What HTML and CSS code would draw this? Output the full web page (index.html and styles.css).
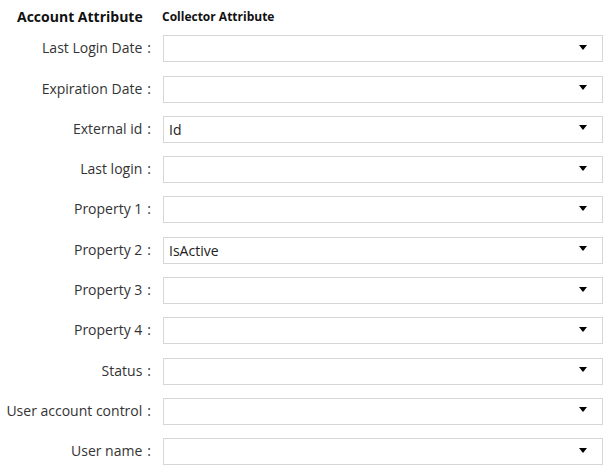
FILE: index.html
```html
<!DOCTYPE html>
<html>
<head>
<meta charset="utf-8">
<link rel="stylesheet" href="styles.css">
</head>
<body>
<div class="form">
  <div class="head-left">Account Attribute</div>
  <div class="head-right">Collector Attribute</div>

  <div class="label">Last Login Date<span class="colon">:</span></div>
  <div class="select"><span class="value"></span><span class="caret"></span></div>

  <div class="label">Expiration Date<span class="colon">:</span></div>
  <div class="select"><span class="value"></span><span class="caret"></span></div>

  <div class="label">External id<span class="colon">:</span></div>
  <div class="select"><span class="value">Id</span><span class="caret"></span></div>

  <div class="label">Last login<span class="colon">:</span></div>
  <div class="select"><span class="value"></span><span class="caret"></span></div>

  <div class="label">Property 1<span class="colon">:</span></div>
  <div class="select"><span class="value"></span><span class="caret"></span></div>

  <div class="label">Property 2<span class="colon">:</span></div>
  <div class="select"><span class="value">IsActive</span><span class="caret"></span></div>

  <div class="label">Property 3<span class="colon">:</span></div>
  <div class="select"><span class="value"></span><span class="caret"></span></div>

  <div class="label">Property 4<span class="colon">:</span></div>
  <div class="select"><span class="value"></span><span class="caret"></span></div>

  <div class="label">Status<span class="colon">:</span></div>
  <div class="select"><span class="value"></span><span class="caret"></span></div>

  <div class="label">User account control<span class="colon">:</span></div>
  <div class="select"><span class="value"></span><span class="caret"></span></div>

  <div class="label">User name<span class="colon">:</span></div>
  <div class="select"><span class="value"></span><span class="caret"></span></div>
</div>
</body>
</html>
```

FILE: styles.css
```css
html, body {
  margin: 0;
  padding: 0;
  background: #fff;
}
body {
  font-family: "Open Sans", "Liberation Sans", sans-serif;
  color: #333;
}
.form {
  display: grid;
  grid-template-columns: 163px 440px;
  grid-template-rows: 14px;
  grid-auto-rows: 27px;
  row-gap: 13.3px;
  padding-top: 8px;
}
.head-left,
.head-right {
  font-weight: 700;
  color: #111;
  line-height: 18px;
  height: 14px;
  white-space: nowrap;
}
.head-left {
  font-size: 14px;
  padding-left: 17px;
}
.head-right {
  font-size: 12px;
  margin-left: -1px;
}
.label {
  font-size: 14px;
  text-align: right;
  padding-right: 12px;
  line-height: 26px;
  white-space: nowrap;
}
.colon {
  margin-left: 5px;
}
.select {
  box-sizing: border-box;
  border: 1px solid #d6d6d6;
  display: flex;
  align-items: center;
  justify-content: space-between;
  padding: 0 15px 0 5px;
  font-size: 14px;
  color: #222;
}
.caret {
  width: 0;
  height: 0;
  border-left: 4px solid transparent;
  border-right: 4px solid transparent;
  border-top: 5px solid #000;
  margin-top: -3px;
}
```
